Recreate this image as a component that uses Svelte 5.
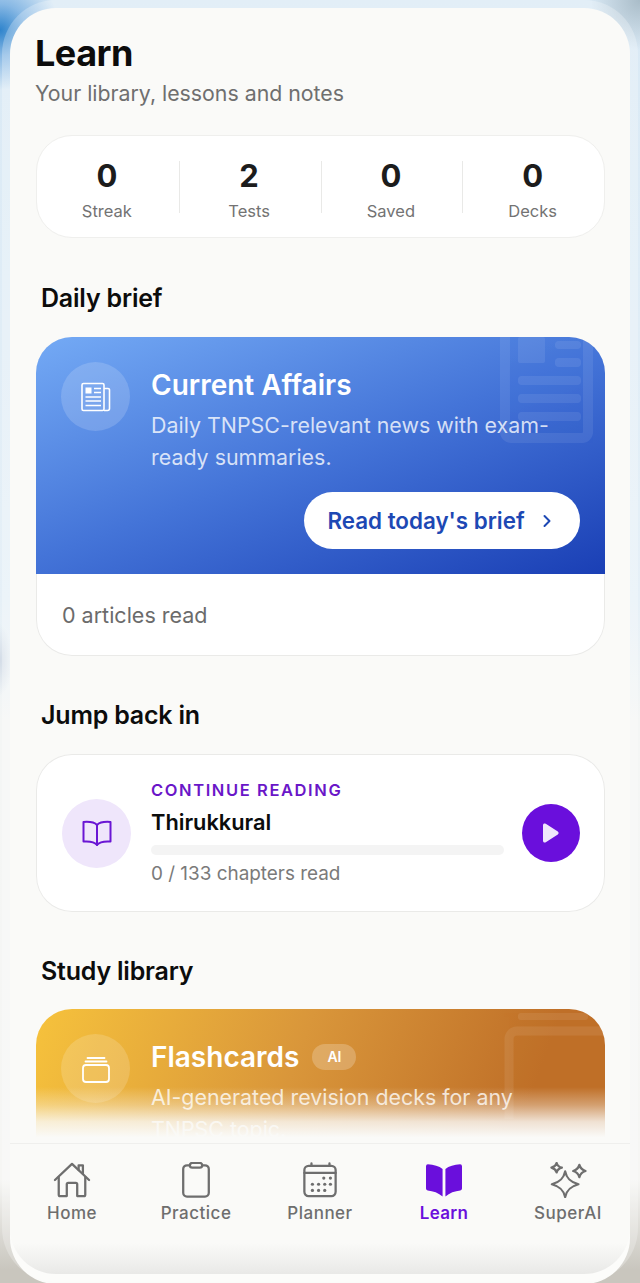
<script>
  const stats = [
    { value: 0, label: 'Streak' },
    { value: 2, label: 'Tests' },
    { value: 0, label: 'Saved' },
    { value: 0, label: 'Decks' }
  ];
  const tabs = ['Home', 'Practice', 'Planner', 'Learn', 'SuperAI'];
</script>

<div class="backdrop">
  <div class="sheet">
    <main class="content">
      <header class="page-head">
        <h1>Learn</h1>
        <p>Your library, lessons and notes</p>
      </header>

      <section class="stats">
        {#each stats as s}
          <div class="stat">
            <strong>{s.value}</strong>
            <span>{s.label}</span>
          </div>
        {/each}
      </section>

      <h2 class="first">Daily brief</h2>
      <section class="card brief">
        <div class="hero blue">
          <svg class="ghost" viewBox="0 0 110 110" fill="none">
            <rect x="10" y="-10" width="83" height="111" rx="6" stroke="#fff" stroke-width="10" />
            <rect x="23" y="0" width="27" height="26" rx="2" fill="#fff" />
            <rect x="60" y="4" width="26" height="8" rx="4" fill="#fff" />
            <rect x="60" y="21" width="26" height="9" rx="4" fill="#fff" />
            <rect x="23" y="39" width="63" height="9" rx="4" fill="#fff" />
            <rect x="23" y="57" width="63" height="9" rx="4" fill="#fff" />
            <rect x="23" y="75" width="63" height="9" rx="4" fill="#fff" />
          </svg>
          <div class="hero-row">
            <div class="bubble">
              <svg viewBox="0 0 32 32" width="32" height="32" fill="none" stroke="#fff" stroke-width="1.6">
                <rect x="2" y="2.5" width="22" height="27" rx="1.5" />
                <path d="M24 7.500h4a1.500 1.500 0 0 1 1.500 1.500v18.500a2 2 0 0 1-2 2h-3.500" />
                <rect x="5.500" y="6.500" width="6" height="6" fill="#fff" stroke="none" />
                <path d="M14 7.500h7M14 11.500h7M5.500 16h15.500M5.500 20h15.500M5.500 24.500h15.500" />
              </svg>
            </div>
            <div class="hero-text">
              <h3>Current Affairs</h3>
              <p>Daily TNPSC-relevant news with exam-ready summaries.</p>
            </div>
          </div>
          <button class="cta">
            Read today's brief
            <svg viewBox="0 0 12 16" width="12" height="16" fill="none" stroke="currentColor" stroke-width="2" stroke-linecap="round" stroke-linejoin="round"><path d="M3.500 3l5 5-5 5" /></svg>
          </button>
        </div>
        <div class="brief-foot">0 articles read</div>
      </section>

      <h2>Jump back in</h2>
      <section class="card resume">
        <div class="book-bubble">
          <svg viewBox="0 0 32 32" width="32" height="32" fill="none" stroke="#6a16d4" stroke-width="2" stroke-linejoin="round" stroke-linecap="round">
            <path d="M16 8C13.500 5.300 9 4.500 2.500 5v19.500c6.500-.5 11 .3 13.500 3.500 2.500-3.200 7-4 13.500-3.500V5C23 4.500 18.500 5.300 16 8z" />
            <path d="M16 8v20" />
          </svg>
        </div>
        <div class="resume-body">
          <div class="eyebrow">CONTINUE READING</div>
          <div class="resume-title">Thirukkural</div>
          <div class="track"></div>
          <div class="resume-meta">0 / 133 chapters read</div>
        </div>
        <button class="play" aria-label="Play">
          <svg viewBox="0 0 16 20" width="16" height="20"><path d="M0 2.200v15.600a1.800 1.800 0 0 0 2.800 1.500l12-7.800a1.800 1.800 0 0 0 0-3L2.800.700A1.800 1.800 0 0 0 0 2.200z" fill="#f0e6fc" /></svg>
        </button>
      </section>

      <h2 class="last">Study library</h2>
      <section class="card-flash">
        <div class="hero amber">
          <svg class="ghost" viewBox="0 0 110 110" fill="none">
            <rect x="23" y="4" width="70" height="7" rx="3" fill="#fff" />
            <rect x="14" y="22" width="130" height="100" rx="8" stroke="#fff" stroke-width="9" />
          </svg>
          <div class="hero-row">
            <div class="bubble">
              <svg viewBox="0 0 32 32" width="32" height="32" fill="none" stroke="#fff" stroke-width="1.800" stroke-linecap="round">
                <rect x="3" y="12" width="26" height="17" rx="3" />
                <path d="M5.500 8.500h21M7.500 5h17" />
              </svg>
            </div>
            <div class="hero-text">
              <h3>Flashcards <span class="pill">AI</span></h3>
              <p>AI-generated revision decks for any TNPSC topic.</p>
            </div>
          </div>
        </div>
      </section>
    </main>

    <nav class="tabbar">
      {#each tabs as t}
        <div class="tab" class:active={t === 'Learn'}>
          {#if t === 'Home'}
            <svg viewBox="0 0 40 38" fill="none" stroke="currentColor" stroke-width="2.400" stroke-linejoin="round" stroke-linecap="round">
              <path d="M2 19 20 2l18 17" />
              <path d="M27 8.500V3.500h4.500v9" />
              <path d="M6 16v18.500a1.500 1.500 0 0 0 1.500 1.500h7V23.500a1.500 1.500 0 0 1 1.500-1.500h8a1.500 1.500 0 0 1 1.500 1.500V36h7a1.500 1.500 0 0 0 1.500-1.500V16" />
            </svg>
          {:else if t === 'Practice'}
            <svg viewBox="0 0 40 38" fill="none" stroke="currentColor" stroke-width="2.400" stroke-linejoin="round">
              <rect x="6.500" y="3.500" width="27" height="33" rx="4" />
              <rect x="13.500" y="1" width="13" height="5" rx="2.500" fill="#fafaf8" />
            </svg>
          {:else if t === 'Planner'}
            <svg viewBox="0 0 40 38" fill="none" stroke="currentColor" stroke-width="2.400" stroke-linecap="round">
              <rect x="3.500" y="4" width="33" height="32" rx="4.500" />
              <path d="M3.500 11.500h33M11 1.500V4M30 1.500V4" />
              <g fill="currentColor" stroke="none">
                <circle cx="24" cy="17" r="1.700" /><circle cx="31" cy="17" r="1.700" />
                <circle cx="12" cy="23.500" r="1.700" /><circle cx="18.500" cy="23.500" r="1.700" /><circle cx="25" cy="23.500" r="1.700" /><circle cx="31" cy="23.500" r="1.700" />
                <circle cx="12" cy="30" r="1.700" /><circle cx="18.500" cy="30" r="1.700" /><circle cx="25" cy="30" r="1.700" />
              </g>
            </svg>
          {:else if t === 'Learn'}
            <svg viewBox="0 0 40 38" fill="currentColor">
              <path d="M18.500 7.500C15 4.500 9 3 3 2.500a2 2 0 0 0-2 2V28a2 2 0 0 0 1.800 2c5.700.5 11.500 2.500 15.700 6.500z" />
              <path d="M21.500 7.500C25 4.500 31 3 37 2.500a2 2 0 0 1 2 2V28a2 2 0 0 1-1.800 2c-5.700.5-11.500 2.500-15.700 6.500z" />
            </svg>
          {:else}
            <svg viewBox="0 0 40 38" fill="none" stroke="currentColor" stroke-width="2.400" stroke-linejoin="round">
              <path d="M17 10c1.500 7 5 11 14 13.500-9 2.500-12.500 6.500-14 13.500-1.500-7-5-11-14-13.500C12 21 15.500 17 17 10z" />
              <path d="M8 1c.8 2.800 2.200 4.200 5.500 5-3.300.8-4.700 2.200-5.500 5-.8-2.800-2.200-4.200-5.500-5C5.800 5.200 7.200 3.800 8 1z" />
              <path d="M32 3c1 3.600 2.800 5.300 6.500 6.500C34.800 10.700 33 12.400 32 16c-1-3.600-2.800-5.300-6.500-6.500C29.200 8.300 31 6.600 32 3z" />
            </svg>
          {/if}
          <span>{t}</span>
        </div>
      {/each}
    </nav>
  </div>
</div>

<style>
  :global(body) {
    margin: 0;
    font-family: Inter, "Liberation Sans", sans-serif;
  }

  .backdrop {
    height: 1283px;
    overflow: hidden;
    padding: 8px 10px 0;
    box-sizing: border-box;
    background:
      radial-gradient(circle at 0 30px, #2f84cc 0, rgba(70, 145, 215, 0.55) 26px, transparent 60px),
      radial-gradient(circle at 640px 0, #a9bcc8 0, transparent 50px),
      radial-gradient(ellipse 12px 36px at 0 660px, #d3dce7 0, transparent 100%),
      linear-gradient(to bottom, #d9e9f5 0, #e6f0f7 600px, #f4f6f5 720px, #f6f6f4 1180px, #c9c6be 1270px);
  }

  .sheet {
    height: 1266px;
    background: #fafaf8;
    border-radius: 46px;
    box-shadow: 0 0 0 8px rgba(255, 255, 255, 0.25), 0 10px 0 0 #fbfbf9;
    display: flex;
    flex-direction: column;
    position: relative;
  }

  .content {
    flex: 1;
    min-height: 0;
    overflow: hidden;
    padding: 25px 25px 0;
    box-sizing: border-box;
    position: relative;
  }

  /* fade at the bottom of the scroll area */
  .content::after {
    content: '';
    position: absolute;
    left: 0;
    right: 0;
    bottom: 0;
    height: 56px;
    background: linear-gradient(
      to bottom,
      rgba(250, 250, 248, 0) 0,
      rgba(250, 250, 248, 0.35) 32%,
      rgba(250, 250, 248, 0.82) 62%,
      #fafaf8 90%
    );
  }

  h1 {
    margin: 0;
    font-size: 36px;
    line-height: 40px;
    font-weight: 700;
    letter-spacing: -0.5px;
    color: #0c0c0c;
  }

  .page-head p {
    margin: 5px 0 0;
    font-size: 21.300px;
    line-height: 30px;
    color: #6f6f6f;
  }

  .stats {
    margin-top: 27px;
    margin-left: 1px;
    height: 103px;
    background: #fff;
    border: 1px solid #efefed;
    border-radius: 36px;
    box-sizing: border-box;
    display: grid;
    grid-template-columns: repeat(4, 1fr);
    align-items: center;
  }

  .stat {
    display: flex;
    flex-direction: column;
    align-items: center;
    height: 52px;
    padding-right: 2px;
    justify-content: flex-start;
    border-left: 1px solid #e9e9e7;
  }

  .stat:first-child {
    border-left: 0;
  }

  .stat strong {
    margin-top: -3px;
    font-size: 31px;
    line-height: 36px;
    font-weight: 700;
    color: #1c1c1c;
  }

  .stat span {
    font-size: 16.500px;
    line-height: 22px;
    margin-top: 6px;
    color: #737373;
  }

  h2 {
    margin: 44px 0 24px 6px;
    font-size: 25px;
    line-height: 30px;
    font-weight: 600;
    color: #0c0c0c;
    letter-spacing: -0.2px;
  }

  h2.first {
    margin-top: 45px;
  }

  h2.last {
    margin-bottom: 23px;
  }

  .card {
    margin-left: 1px;
    background: #fff;
    box-shadow: inset 0 0 0 1px #eaeae8;
    border-radius: 36px;
    overflow: hidden;
  }

  .hero {
    position: relative;
    overflow: hidden;
    padding: 25px 25px 0;
    box-sizing: border-box;
  }

  .blue {
    height: 237px;
    background: linear-gradient(160deg, #74aaf5 0%, #4474d8 50%, #1a3fb5 100%);
  }

  .amber {
    height: 140px;
    background: linear-gradient(110deg, #f6c23c 0%, #d9963a 45%, #bf6f28 85%);
  }

  .ghost {
    position: absolute;
    right: 0;
    top: 0;
    width: 110px;
    height: 110px;
    opacity: 0.08;
  }

  .hero-row {
    position: relative;
    display: flex;
    gap: 21px;
  }

  .bubble {
    flex: none;
    width: 69px;
    height: 69px;
    border-radius: 50%;
    background: rgba(255, 255, 255, 0.16);
    display: flex;
    align-items: center;
    justify-content: center;
  }

  .hero-text h3 {
    margin: 6px 0 0;
    font-size: 28px;
    line-height: 34px;
    font-weight: 600;
    color: #fff;
    display: flex;
    align-items: center;
    gap: 13px;
  }

  .hero-text p {
    margin: 7px 0 0;
    font-size: 21.400px;
    line-height: 32px;
    color: rgba(255, 255, 255, 0.78);
  }

  .pill {
    font-size: 14px;
    line-height: 26px;
    padding: 0 15px;
    border-radius: 13px;
    font-weight: 600;
    background: rgba(255, 255, 255, 0.22);
  }

  .cta {
    position: absolute;
    right: 25px;
    top: 155px;
    height: 57px;
    width: 276px;
    border: 0;
    border-radius: 29px;
    background: #fff;
    color: #1d48b4;
    font: 600 22.400px Inter, "Liberation Sans", sans-serif;
    display: flex;
    align-items: center;
    justify-content: center;
    gap: 16px;
    padding: 0 4px 0 0;
  }

  .brief-foot {
    height: 82px;
    line-height: 82px;
    padding-left: 26px;
    font-size: 21.500px;
    color: #6b6b6b;
  }

  .resume {
    height: 158px;
    display: flex;
    align-items: center;
    padding: 0 25px 0 26px;
  }

  .book-bubble {
    flex: none;
    width: 69px;
    height: 69px;
    border-radius: 50%;
    background: #efe6fb;
    display: flex;
    align-items: center;
    justify-content: center;
  }

  .resume-body {
    flex: 1;
    min-width: 0;
    margin: 0 18px 0 20px;
  }

  .eyebrow {
    font-size: 16.500px;
    line-height: 22px;
    font-weight: 600;
    letter-spacing: 1.600px;
    color: #6a16c8;
  }

  .resume-title {
    margin-top: 7px;
    font-size: 21.800px;
    line-height: 28px;
    font-weight: 600;
    color: #0c0c0c;
  }

  .track {
    margin-top: 9px;
    height: 10px;
    border-radius: 5px;
    background: #f4f4f4;
  }

  .resume-meta {
    margin-top: 6px;
    font-size: 18.900px;
    line-height: 26px;
    color: #7a7a7a;
  }

  .play {
    flex: none;
    width: 58px;
    height: 58px;
    border: 0;
    padding: 0;
    border-radius: 50%;
    background: #6a0fdc;
    display: flex;
    align-items: center;
    justify-content: center;
  }

  .card-flash {
    margin-left: 1px;
    border-radius: 36px 36px 0 0;
    overflow: hidden;
  }

  .tabbar {
    flex: none;
    height: 131px;
    border-top: 1px solid #efefed;
    box-sizing: border-box;
    display: grid;
    grid-template-columns: repeat(5, 1fr);
    padding: 18px 0 0;
    border-radius: 0 0 46px 46px;
    background: linear-gradient(to bottom, #fafaf8 0, #fafaf8 76%, #e9e9e7 100%);
  }

  .tab {
    display: flex;
    flex-direction: column;
    align-items: center;
    color: #6e6e6e;
  }

  .tab svg {
    width: 40px;
    height: 36px;
  }

  .tab span {
    margin-top: 4px;
    font-size: 17px;
    line-height: 22px;
    font-weight: 500;
    letter-spacing: 0.5px;
  }

  .tab.active {
    color: #6a0fdc;
  }

  .tab.active span {
    font-weight: 600;
    letter-spacing: 0.3px;
  }
</style>
